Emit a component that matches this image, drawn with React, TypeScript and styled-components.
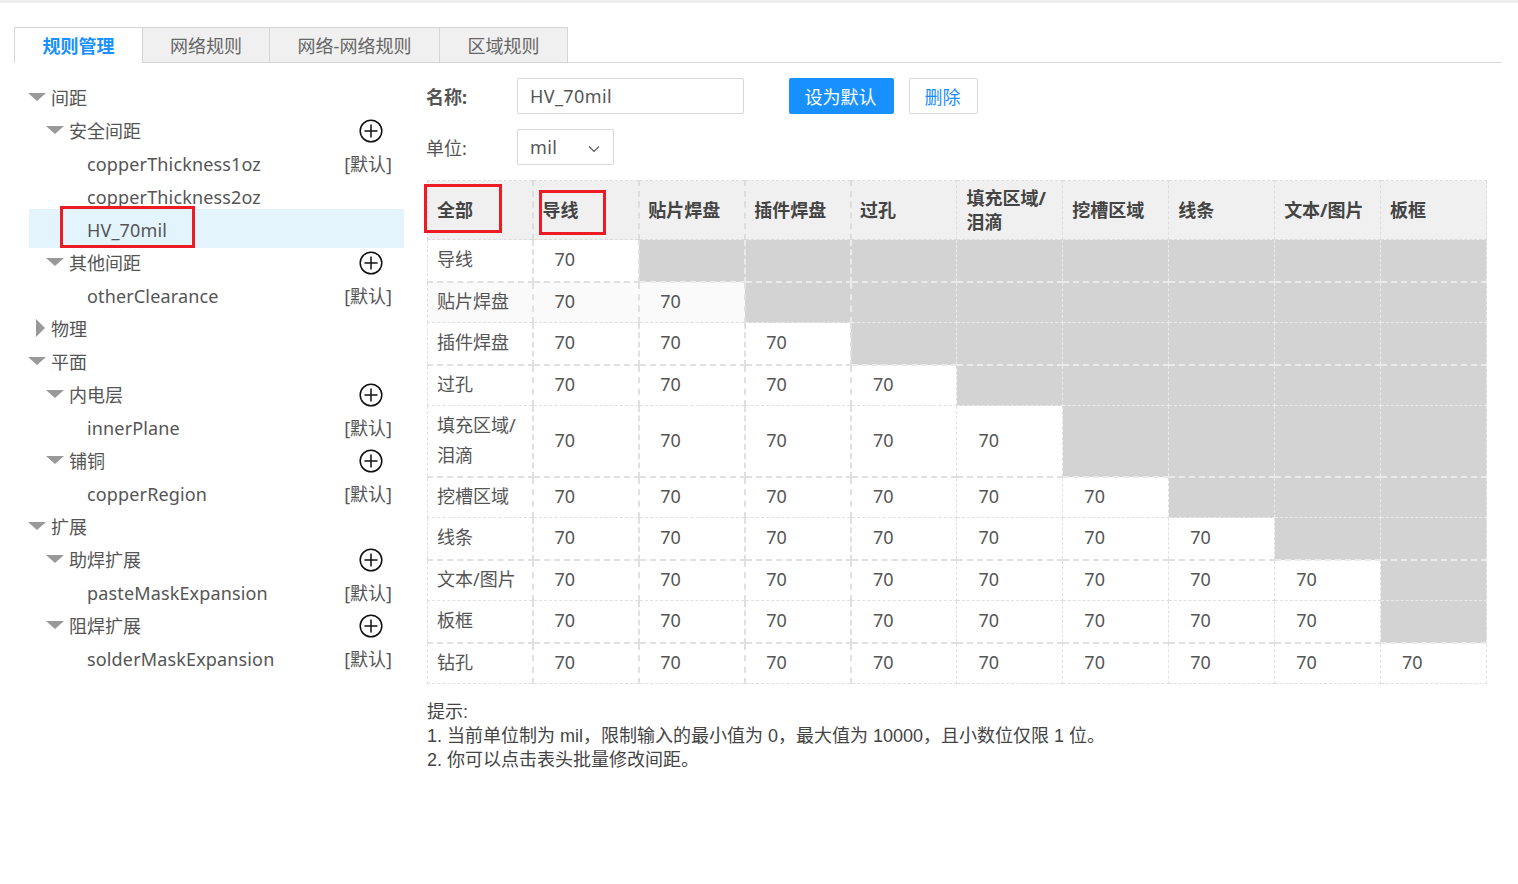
import React from 'react'
import styled, { createGlobalStyle } from 'styled-components'

const GlobalStyle = createGlobalStyle`
	html, body {
		margin: 0;
		background: #fff;
		font-family: "Noto Sans", "Noto Sans CJK SC", sans-serif;
		font-size: 18px;
		color: #555;
	}
`

const Page = styled.div`
	position: relative;
	width: 1518px;
	height: 884px;
	border-top: 3px solid #eee;
	box-sizing: border-box;
	padding: 24px 16px 0 14px;
	overflow: hidden;
`

const Tabs = styled.div`
	display: flex;
	height: 36px;
	box-sizing: border-box;
	border-bottom: 1px solid #d9d9d9;
`

const Tab = styled.div<{ $active?: boolean; $w: number }>`
	width: ${p => p.$w}px;
	height: 36px;
	box-sizing: border-box;
	display: flex;
	align-items: center;
	justify-content: center;
	padding-bottom: 1px;
	border: 1px solid #d5d5d5;
	border-left-width: ${p => (p.$active ? 1 : 0)}px;
	border-bottom: ${p => (p.$active ? 'none' : '1px solid #d5d5d5')};
	background: ${p => (p.$active ? '#fff' : '#f0f0f0')};
	color: ${p => (p.$active ? '#1890ff' : '#666')};
	font-weight: ${p => (p.$active ? 700 : 400)};
`

const Body = styled.div`
	display: flex;
	align-items: flex-start;
`

const Tree = styled.div`
	width: 375px;
	margin: 17px 0 0 15px;
	flex-shrink: 0;
`

const TreeRow = styled.div<{ $level: number; $selected?: boolean }>`
	display: flex;
	align-items: center;
	height: ${p => (p.$selected ? 39 : 33)}px;
	margin: ${p => (p.$selected ? '-3px 0' : '0')};
	padding-left: ${p => p.$level * 18}px;
	padding-right: 12px;
	background: ${p => (p.$selected ? '#e3f4fd' : 'transparent')};
	white-space: nowrap;
`

const Arrow = styled.span<{ $open: boolean }>`
	width: 23px;
	margin-left: -1px;
	flex-shrink: 0;
	display: flex;
	justify-content: ${p => (p.$open ? 'flex-start' : 'center')};
	&::before {
		content: "";
		width: 0;
		height: 0;
		${p =>
			p.$open
				? `border-left: 9px solid transparent;
				   border-right: 9px solid transparent;
				   border-top: 8px solid #999;`
				: `border-top: 9px solid transparent;
				   border-bottom: 9px solid transparent;
				   border-left: 9px solid #999;
				   margin-left: 1px;`}
	}
`

const LeafLabel = styled.span`
	margin-left: 40px;
	padding-top: 2px;
	letter-spacing: 0.15px;
`

const RowEnd = styled.span`
	margin-left: auto;
	display: flex;
	align-items: center;
`

const AddButton = styled.span`
	display: flex;
	margin: 2px 9px 0 0;
`

const Detail = styled.div`
	margin: 15px 0 0 23px;
	width: 1060px;
`

const FormRow = styled.div`
	display: flex;
	align-items: center;
	height: 36px;
	margin-bottom: 15px;
`

const FormLabel = styled.label<{ $bold?: boolean }>`
	width: 91px;
	margin-left: -1px;
	font-weight: ${p => (p.$bold ? 700 : 400)};
`

const NameInput = styled.div`
	width: 227px;
	height: 36px;
	box-sizing: border-box;
	border: 1px solid #d9d9d9;
	border-radius: 2px;
	padding-left: 12px;
	display: flex;
	align-items: center;
	letter-spacing: 0.4px;
`

const UnitSelect = styled(NameInput)`
	width: 97px;
	position: relative;
`

const Chevron = styled.svg`
	position: absolute;
	right: 13px;
	top: 15px;
`

const PrimaryButton = styled.button`
	width: 105px;
	height: 36px;
	margin-left: 45px;
	border: none;
	border-radius: 2px;
	background: #1890ff;
	color: #fff;
	font: inherit;
	padding: 0 2px 0 0;
`

const GhostButton = styled.button`
	width: 69px;
	height: 36px;
	margin-left: 15px;
	border: 1px solid #d9d9d9;
	border-radius: 2px;
	background: #fff;
	color: #1890ff;
	font: inherit;
	padding: 0 2px 0 0;
`

const RulesTable = styled.table`
	width: 1060px;
	table-layout: fixed;
	border-collapse: collapse;
`

const HeadCell = styled.th<{ $thick?: boolean; $afterThick?: boolean }>`
	height: 59px;
	padding: 0 9px 0 ${p => (p.$afterThick ? 8 : 9)}px;
	box-sizing: border-box;
	background: #f0f0f0;
	border: 1px dashed #dcdcdc;
	border-right-width: ${p => (p.$thick ? 2 : 1)}px;
	text-align: left;
	font-weight: 700;
	font-size: 18px;
	line-height: 24px;
	color: #444;
`

const RowHead = styled.td<{ $shaded?: boolean; $thickBottom?: boolean }>`
	padding: 0 9px 2px;
	border: 1px dashed #e0e0e0;
	border-right-width: 2px;
	border-bottom-width: ${p => (p.$thickBottom ? 2 : 1)}px;
	background: ${p => (p.$shaded ? '#fafafa' : '#fff')};
	line-height: 30px;
`

const Row = styled.tr<{ $h: number }>`
	height: ${p => p.$h}px;
`

const ValueCell = styled.td<{ $shaded?: boolean; $thick?: boolean; $thickBottom?: boolean }>`
	padding: 0 0 2px ${p => (p.$thick ? 20 : 21)}px;
	border: 1px dashed #e0e0e0;
	border-right-width: ${p => (p.$thick ? 2 : 1)}px;
	border-bottom-width: ${p => (p.$thickBottom ? 2 : 1)}px;
	background: ${p => (p.$shaded ? '#fafafa' : '#fff')};
`

const BlockedCell = styled.td<{ $thick?: boolean; $thickBottom?: boolean }>`
	padding: 0;
	background: #d3d3d3;
	border: 1px dashed #eaeaea;
	border-right-width: ${p => (p.$thick ? 2 : 1)}px;
	border-bottom-width: ${p => (p.$thickBottom ? 2 : 1)}px;
`

const Notes = styled.div`
	margin-top: 16px;
	font-family: "Liberation Sans", "Noto Sans CJK SC", sans-serif;
	font-size: 18px;
	line-height: 24px;
	color: #444;
`

const Callout = styled.div<{ $x: number; $y: number; $w: number; $h: number }>`
	position: absolute;
	left: ${p => p.$x}px;
	top: ${p => p.$y}px;
	width: ${p => p.$w}px;
	height: ${p => p.$h}px;
	box-sizing: border-box;
	border: 3px solid #ed1c24;
	pointer-events: none;
`

type Node = {
	label: string
	level: number
	kind: 'group' | 'closed' | 'leaf'
	add?: boolean
	isDefault?: boolean
	selected?: boolean
}

const tree: Node[] = [
	{ label: '间距', level: 0, kind: 'group' },
	{ label: '安全间距', level: 1, kind: 'group', add: true },
	{ label: 'copperThickness1oz', level: 1, kind: 'leaf', isDefault: true },
	{ label: 'copperThickness2oz', level: 1, kind: 'leaf' },
	{ label: 'HV_70mil', level: 1, kind: 'leaf', selected: true },
	{ label: '其他间距', level: 1, kind: 'group', add: true },
	{ label: 'otherClearance', level: 1, kind: 'leaf', isDefault: true },
	{ label: '物理', level: 0, kind: 'closed' },
	{ label: '平面', level: 0, kind: 'group' },
	{ label: '内电层', level: 1, kind: 'group', add: true },
	{ label: 'innerPlane', level: 1, kind: 'leaf', isDefault: true },
	{ label: '铺铜', level: 1, kind: 'group', add: true },
	{ label: 'copperRegion', level: 1, kind: 'leaf', isDefault: true },
	{ label: '扩展', level: 0, kind: 'group' },
	{ label: '助焊扩展', level: 1, kind: 'group', add: true },
	{ label: 'pasteMaskExpansion', level: 1, kind: 'leaf', isDefault: true },
	{ label: '阻焊扩展', level: 1, kind: 'group', add: true },
	{ label: 'solderMaskExpansion', level: 1, kind: 'leaf', isDefault: true },
]

const columns = ['导线', '贴片焊盘', '插件焊盘', '过孔', '填充区域/泪滴', '挖槽区域', '线条', '文本/图片', '板框']

const rows = [
	{ name: '导线', h: 42, filled: 1 },
	{ name: '贴片焊盘', h: 41, filled: 2 },
	{ name: '插件焊盘', h: 42, filled: 3 },
	{ name: '过孔', h: 41, filled: 4 },
	{ name: '填充区域/泪滴', h: 71, filled: 5 },
	{ name: '挖槽区域', h: 41, filled: 6 },
	{ name: '线条', h: 42, filled: 7 },
	{ name: '文本/图片', h: 41, filled: 8 },
	{ name: '板框', h: 42, filled: 8 },
	{ name: '钻孔', h: 41, filled: 9 },
]

function breakSlash(text: string) {
	const at = text.indexOf('/')
	if (text.length < 6 || at < 0) return text
	return (
		<>
			{text.slice(0, at + 1)}
			<br />
			{text.slice(at + 1)}
		</>
	)
}

function PlusIcon() {
	return (
		<svg width="24" height="24" viewBox="0 0 24 24" fill="none" stroke="#111" strokeWidth="1.5">
			<circle cx="12" cy="12" r="10.8" />
			<path d="M12 5.5v13M5.5 12h13" />
		</svg>
	)
}

export default function App() {
	return (
		<Page>
			<GlobalStyle />
			<Tabs>
				<Tab $active $w={129}>规则管理</Tab>
				<Tab $w={127}>网络规则</Tab>
				<Tab $w={170}>网络-网络规则</Tab>
				<Tab $w={128}>区域规则</Tab>
			</Tabs>
			<Body>
				<Tree>
					{tree.map(node => (
						<TreeRow key={node.label} $level={node.level} $selected={node.selected}>
							{node.kind === 'leaf' ? (
								<LeafLabel>{node.label}</LeafLabel>
							) : (
								<>
									<Arrow $open={node.kind === 'group'} />
									<span>{node.label}</span>
								</>
							)}
							<RowEnd>
								{node.add && (
									<AddButton>
										<PlusIcon />
									</AddButton>
								)}
								{node.isDefault && '[默认]'}
							</RowEnd>
						</TreeRow>
					))}
				</Tree>
				<Detail>
					<FormRow>
						<FormLabel $bold>名称:</FormLabel>
						<NameInput>HV_70mil</NameInput>
						<PrimaryButton>设为默认</PrimaryButton>
						<GhostButton>删除</GhostButton>
					</FormRow>
					<FormRow>
						<FormLabel>单位:</FormLabel>
						<UnitSelect>
							mil
							<Chevron width="12" height="8" viewBox="0 0 12 8" fill="none" stroke="#555" strokeWidth="1.1">
								<path d="M1 1.5l5 5 5-5" />
							</Chevron>
						</UnitSelect>
					</FormRow>
					<RulesTable>
						<thead>
							<tr>
								<HeadCell $thick>全部</HeadCell>
								{columns.map((col, c) => (
									<HeadCell key={col} $thick={c < 3} $afterThick={c <= 3}>{breakSlash(col)}</HeadCell>
								))}
							</tr>
						</thead>
						<tbody>
							{rows.map((row, r) => {
								const thickBottom = r % 2 === 0
								return (
									<Row key={row.name} $h={row.h}>
										<RowHead $shaded={r === 1} $thickBottom={thickBottom}>{breakSlash(row.name)}</RowHead>
										{columns.map((col, c) =>
											c < row.filled ? (
												<ValueCell key={col} $shaded={r === 1} $thick={c < 3} $thickBottom={thickBottom}>70</ValueCell>
											) : (
												<BlockedCell key={col} $thick={c < 3} $thickBottom={thickBottom} />
											),
										)}
									</Row>
								)
							})}
						</tbody>
					</RulesTable>
					<Notes>
						提示:
						<br />
						1. 当前单位制为 mil，限制输入的最小值为 0，最大值为 10000，且小数位仅限 1 位。
						<br />
						2. 你可以点击表头批量修改间距。
					</Notes>
				</Detail>
			</Body>
			<Callout $x={60} $y={203} $w={135} $h={42} />
			<Callout $x={424} $y={181} $w={78} $h={49} />
			<Callout $x={539} $y={187} $w={67} $h={45} />
		</Page>
	)
}
